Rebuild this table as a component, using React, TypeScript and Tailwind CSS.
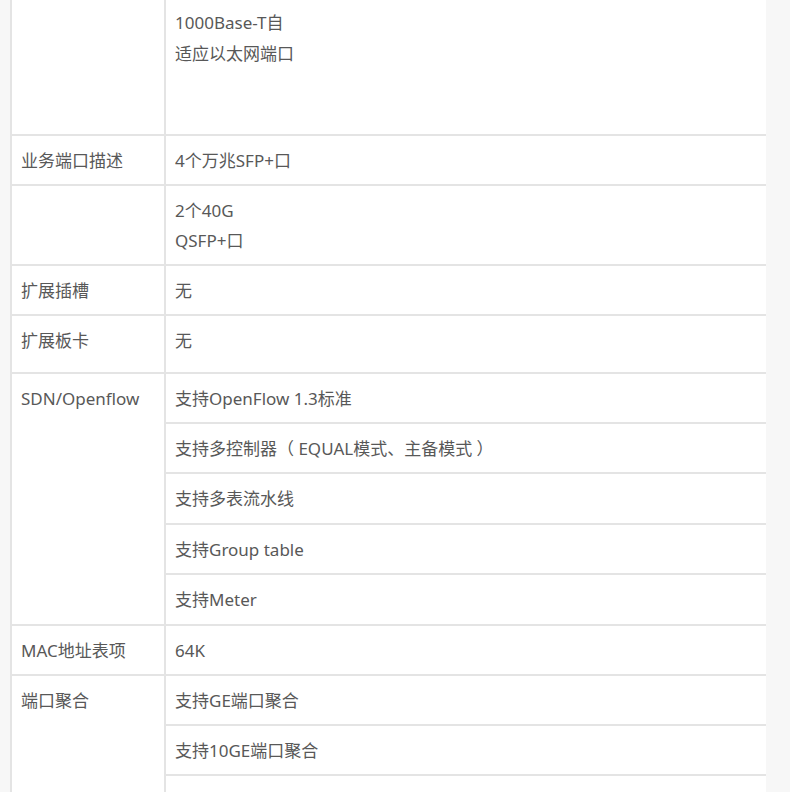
import React from "react";

type Item = { lines: string[]; h: string };

function Cell({ lines, h, pad, lh }: { lines: string[]; h: string; pad: string; lh: string }) {
  return (
    <div className={`border-b-2 border-[#e4e4e4] pl-[9px] box-border ${h} ${pad}`}>
      {lines.map((l, i) => (
        <div key={i} className={`whitespace-nowrap ${lh}`}>
          {l}
        </div>
      ))}
    </div>
  );
}

function Row({
  label,
  items,
  h = "",
  pad = "pt-[10px]",
  lh = "leading-[30px]",
}: {
  label: string;
  items: Item[];
  h?: string;
  pad?: string;
  lh?: string;
}) {
  return (
    <div className="flex">
      <div
        className={`w-[154px] shrink-0 border-r-2 border-b-2 border-[#e4e4e4] pl-[9px] box-border ${pad} ${h}`}
      >
        <div className={`whitespace-nowrap ${lh}`}>{label}</div>
      </div>
      <div className="flex-1 flex flex-col">
        {items.map((it, i) => (
          <Cell key={i} lines={it.lines} h={it.h} pad={pad} lh={lh} />
        ))}
      </div>
    </div>
  );
}

export default function App() {
  return (
    <div className="h-[792px] w-[790px] overflow-hidden bg-[#f7f7f7] text-[17px] text-[#585858] font-['Noto_Sans','Noto_Sans_CJK_SC',sans-serif]">
      <div className="ml-[10px] w-[756px] bg-white border-l-2 border-[#e4e4e4] -mt-[40px]">
        <Row
          label="管理端口"
          h="h-[176px]"
          pad="pt-[16px]"
          lh="leading-[31px]"
          items={[{ lines: ["1个10/100/", "1000Base-T自", "适应以太网端口"], h: "h-[176px]" }]}
        />
        <Row label="业务端口描述" h="h-[50px]" items={[{ lines: ["4个万兆SFP+口"], h: "h-[50px]" }]} />
        <Row label="" h="h-[80px]" items={[{ lines: ["2个40G", "QSFP+口"], h: "h-[80px]" }]} />
        <Row label="扩展插槽" h="h-[50px]" items={[{ lines: ["无"], h: "h-[50px]" }]} />
        <Row label="扩展板卡" h="h-[58px]" items={[{ lines: ["无"], h: "h-[58px]" }]} />
        <Row
          label="SDN/Openflow"
          items={[
            { lines: ["支持OpenFlow 1.3标准"], h: "h-[50px]" },
            { lines: ["支持多控制器（ EQUAL模式、主备模式 ）"], h: "h-[50px]" },
            { lines: ["支持多表流水线"], h: "h-[51px]" },
            { lines: ["支持Group table"], h: "h-[50px]" },
            { lines: ["支持Meter"], h: "h-[51px]" },
          ]}
        />
        <Row label="MAC地址表项" h="h-[50px]" items={[{ lines: ["64K"], h: "h-[50px]" }]} />
        <Row
          label="端口聚合"
          items={[
            { lines: ["支持GE端口聚合"], h: "h-[50px]" },
            { lines: ["支持10GE端口聚合"], h: "h-[50px]" },
            { lines: ["支持跨设备链路聚合"], h: "h-[50px]" },
          ]}
        />
      </div>
    </div>
  );
}
